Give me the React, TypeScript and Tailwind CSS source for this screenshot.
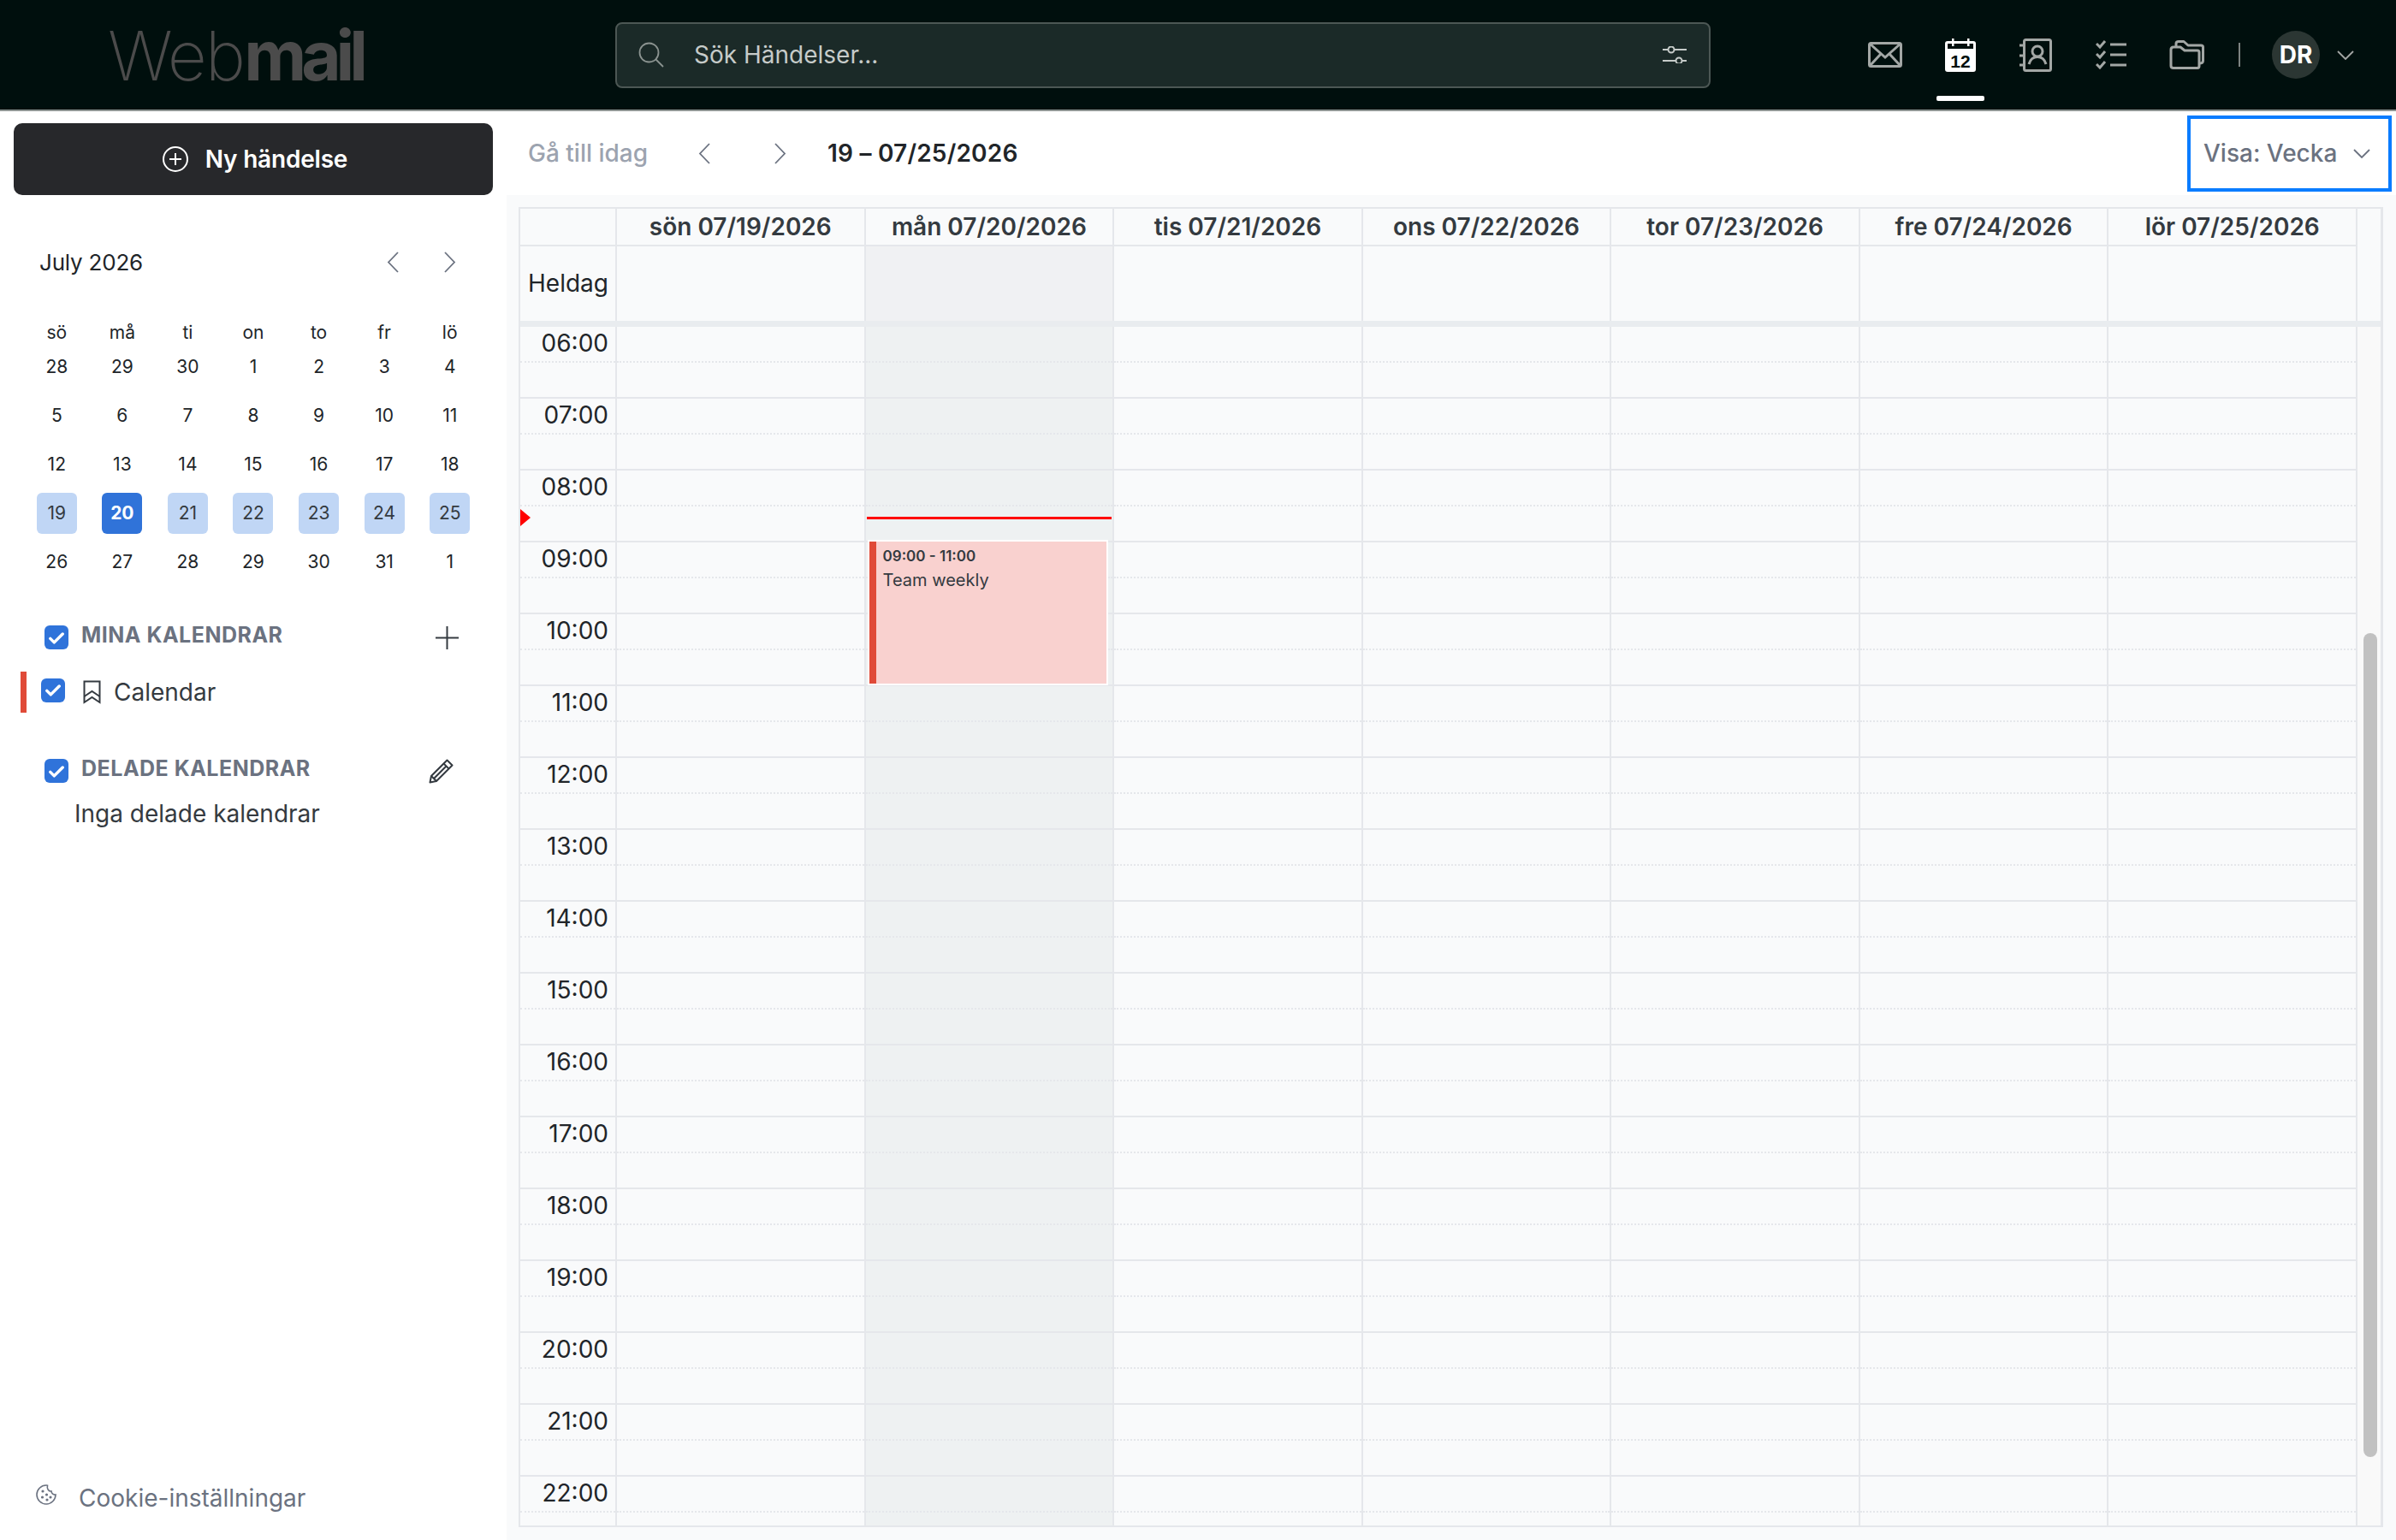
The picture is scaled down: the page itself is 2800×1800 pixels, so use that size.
const weeks = [
  [28, 29, 30, 1, 2, 3, 4],
  [5, 6, 7, 8, 9, 10, 11],
  [12, 13, 14, 15, 16, 17, 18],
  [19, 20, 21, 22, 23, 24, 25],
  [26, 27, 28, 29, 30, 31, 1],
];
const dayNames = ["sö", "må", "ti", "on", "to", "fr", "lö"];
const columns = ["sön 07/19/2026", "mån 07/20/2026", "tis 07/21/2026", "ons 07/22/2026", "tor 07/23/2026", "fre 07/24/2026", "lör 07/25/2026"];
const hours = ["06:00", "07:00", "08:00", "09:00", "10:00", "11:00", "12:00", "13:00", "14:00", "15:00", "16:00", "17:00", "18:00", "19:00", "20:00", "21:00", "22:00"];

function Chevron({ dir, className }: { dir: "left" | "right" | "down"; className: string }) {
  if (dir === "down") {
    return (
      <svg viewBox="0 0 20 11" fill="none" stroke="currentColor" strokeWidth="1.8" className={className}>
        <polyline points="1,1 10,10 19,1" />
      </svg>
    );
  }
  return (
    <svg viewBox="0 0 14 25" fill="none" stroke="currentColor" strokeWidth="1.8" className={className}>
      {dir === "left" ? <polyline points="13,1 2,12.5 13,24" /> : <polyline points="1,1 12,12.5 1,24" />}
    </svg>
  );
}

function Check() {
  return (
    <div className="flex h-[28px] w-[28px] shrink-0 items-center justify-center rounded-[6px] bg-[#2f73da]">
      <svg viewBox="0 0 20 16" fill="none" stroke="white" strokeWidth="3.8" strokeLinecap="round" strokeLinejoin="round" className="h-[15px] w-[18px]">
        <polyline points="2,9 7,14 18,3" />
      </svg>
    </div>
  );
}

function Header() {
  return (
    <header className="flex h-[130px] shrink-0 items-center border-b-2 border-[#8f9593] bg-[#000f0d]">
      <div className="w-[719px] shrink-0 pl-[126px] pt-[2px] text-[80px] leading-none tracking-[-2px] text-[#4b4b4b]">
        <span className="font-extralight">Web</span>
        <span className="tracking-[-6px] font-bold">mail</span>
      </div>
      <div className="flex h-[77px] w-[1280px] shrink-0 items-center rounded-[8px] border-2 border-[#4c5754] bg-[#1b2a28] pl-[25px] pr-[26px]">
        <svg viewBox="0 0 30 30" fill="none" stroke="#8b9390" strokeWidth="1.8" className="h-[30px] w-[30px] shrink-0">
          <circle cx="12.5" cy="12.5" r="11" />
          <line x1="20.5" y1="20.5" x2="29" y2="29" />
        </svg>
        <span className="ml-[35px] flex-1 text-[28px] text-[#c6cbc9]">Sök Händelser...</span>
        <svg viewBox="0 0 28 20" fill="none" stroke="#c6cbc9" strokeWidth="2" className="h-[20px] w-[28px] shrink-0">
          <line x1="0" y1="4" x2="6" y2="4" />
          <circle cx="10" cy="4" r="3.5" />
          <line x1="14" y1="4" x2="28" y2="4" />
          <line x1="0" y1="17" x2="15" y2="17" />
          <circle cx="19" cy="17" r="3.5" />
          <line x1="23" y1="17" x2="28" y2="17" />
        </svg>
      </div>
      <nav className="ml-[160px] flex h-full items-center">
        <div className="flex w-[88px] justify-center">
          <svg viewBox="0 0 40 30" fill="none" stroke="#a3a7a5" strokeWidth="3" className="h-[30px] w-[40px]">
            <rect x="1.5" y="1.5" width="37" height="27" rx="2" />
            <polyline points="2,2 20,18 38,2" />
            <line x1="2" y1="28" x2="15" y2="14" />
            <line x1="38" y1="28" x2="25" y2="14" />
          </svg>
        </div>
        <div className="relative flex h-full w-[88px] items-center justify-center">
          <svg viewBox="0 0 36 39" className="h-[39px] w-[36px]">
            <rect x="0" y="3" width="36" height="36" rx="3" fill="white" />
            <rect x="3" y="6" width="30" height="6" fill="#000f0d" />
            <rect x="8" y="0" width="2.5" height="9" fill="white" />
            <rect x="26" y="0" width="2.5" height="9" fill="white" />
            <text x="18" y="34" textAnchor="middle" fontSize="21" fontWeight="700" fontFamily="Liberation Sans" fill="#000f0d">12</text>
          </svg>
          <div className="absolute bottom-[10px] left-[16px] h-[6px] w-[56px] rounded-[2px] bg-white" />
        </div>
        <div className="flex w-[88px] justify-center">
          <svg viewBox="0 0 38 39" fill="none" stroke="#a3a7a5" strokeWidth="3" className="h-[39px] w-[38px]">
            <rect x="5.5" y="1.5" width="31" height="36" rx="2" />
            <line x1="0" y1="8" x2="5" y2="8" />
            <line x1="0" y1="20" x2="5" y2="20" />
            <line x1="0" y1="31" x2="5" y2="31" />
            <circle cx="21" cy="15" r="6" />
            <path d="M11 30 C13 23 17 21.5 21 21.5 C25 21.5 29 23 31 30" />
          </svg>
        </div>
        <div className="flex w-[88px] justify-center">
          <svg viewBox="0 0 36 34" fill="none" stroke="#a3a7a5" strokeWidth="3" className="h-[34px] w-[36px]">
            <polyline points="1,4 5,8 11,1" />
            <polyline points="1,16 5,20 11,13" />
            <polyline points="1,28 5,32 11,25" />
            <line x1="17" y1="5" x2="36" y2="5" />
            <line x1="17" y1="17" x2="36" y2="17" />
            <line x1="17" y1="29" x2="36" y2="29" />
          </svg>
        </div>
        <div className="flex w-[88px] justify-center">
          <svg viewBox="0 0 41 34" fill="none" stroke="#a3a7a5" strokeWidth="3" strokeLinejoin="round" className="h-[34px] w-[41px]">
            <path d="M2 11 C2 9 3 8 5 8 H13 L18 12 H33 C34.5 12 35 13 35 14 V30 C35 31.5 34 32.5 33 32.5 H5 C3 32.5 2 31.5 2 30 Z" />
            <path d="M8 8 V4 C8 2.5 9 1.5 11 1.5 H17 L22 6 H37 C38.5 6 39.5 7 39.5 8 V24 C39.5 26 38 27 35 27" />
          </svg>
        </div>
        <div className="ml-[17px] h-[28px] w-[2px] bg-[#7d8381]" />
        <div className="ml-[37px] flex h-[56px] w-[56px] items-center justify-center rounded-full bg-[#2b3633] text-[28px] font-bold text-white">DR</div>
        <Chevron dir="down" className="ml-[20px] h-[11px] w-[20px] text-[#a3a7a5]" />
      </nav>
    </header>
  );
}

function Sidebar() {
  return (
    <aside className="flex w-[592px] shrink-0 flex-col bg-white pb-[29px]">
      <button className="mx-[16px] mt-[14px] flex h-[84px] shrink-0 items-center justify-center gap-[20px] rounded-[10px] bg-[#27282b] pl-[4px] text-[28px] font-semibold tracking-[-0.2px] text-white">
        <svg viewBox="0 0 30 30" fill="none" stroke="white" strokeWidth="2" className="h-[30px] w-[30px]">
          <circle cx="15" cy="15" r="14" />
          <line x1="15" y1="8" x2="15" y2="22" />
          <line x1="8" y1="15" x2="22" y2="15" />
        </svg>
        Ny händelse
      </button>
      <div className="mt-[58px] flex h-[40px] items-center pl-[46px] pr-[59px]">
        <span className="flex-1 text-[26px] tracking-[-0.2px] text-[#212529]">July 2026</span>
        <Chevron dir="left" className="h-[25px] w-[14px] text-[#6b7280]" />
        <Chevron dir="right" className="ml-[53px] h-[25px] w-[14px] text-[#6b7280]" />
      </div>
      <div className="ml-[28px] mt-[52px] grid w-[536px] grid-cols-7 self-start text-center text-[21px] leading-[22px] text-[#212529]">
        {dayNames.map((d) => (
          <div key={d}>{d}</div>
        ))}
      </div>
      <div className="ml-[28px] w-[536px]">
        {weeks.map((w, i) => (
          <div key={i} className="grid h-[57px] grid-cols-7">
            {w.map((d, j) => (
              <div key={j} className="flex items-center justify-center">
                {i === 3 ? (
                  <span className={"flex h-[48px] w-[47px] items-center justify-center rounded-[6px] text-[21px] " + (j === 1 ? "bg-[#3073d9] font-bold text-white" : "bg-[#c0d6f5] text-[#343a40]")}>{d}</span>
                ) : (
                  <span className="text-[21px] text-[#212529]">{d}</span>
                )}
              </div>
            ))}
          </div>
        ))}
      </div>
      <div className="mt-[46px] flex h-[28px] items-center pl-[52px] pr-[56px]">
        <Check />
        <span className="mb-[4px] ml-[15px] flex-1 text-[25px] font-bold tracking-[0.5px] text-[#6b7280]">MINA KALENDRAR</span>
        <svg viewBox="0 0 27 27" fill="none" stroke="#343a40" strokeWidth="2" className="h-[27px] w-[27px]">
          <line x1="13.5" y1="0" x2="13.5" y2="27" />
          <line x1="0" y1="13.5" x2="27" y2="13.5" />
        </svg>
      </div>
      <div className="mt-[26px] flex h-[48px] items-center pl-[24px]">
        <div className="h-full w-[7px] bg-[#e04a38]" />
        <div className="mb-[5px] ml-[17px]">
          <Check />
        </div>
        <svg viewBox="0 0 21 28" fill="none" stroke="#343a40" strokeWidth="2" className="ml-[21px] h-[28px] w-[21px]">
          <path d="M1.5 1.5 H19.5 V26 L10.5 20 L1.5 26 Z" />
          <polyline points="1.5,19 10.5,13 19.5,19" />
        </svg>
        <span className="ml-[15px] text-[28px] text-[#343a40]">Calendar</span>
      </div>
      <div className="mt-[54px] flex h-[28px] items-center pl-[52px] pr-[62px]">
        <Check />
        <span className="mb-[4px] ml-[15px] flex-1 text-[25px] font-bold tracking-[0.5px] text-[#6b7280]">DELADE KALENDRAR</span>
        <svg viewBox="0 0 29 29" fill="none" stroke="#343a40" strokeWidth="2" strokeLinejoin="round" className="h-[29px] w-[29px]">
          <path d="M21.5 1.5 L27.5 7.5 L9 26 L1.5 27.5 L3 20 Z" />
          <line x1="17.5" y1="5.5" x2="23.5" y2="11.5" />
          <line x1="6" y1="23" x2="20.5" y2="8.5" />
          <line x1="3" y1="20" x2="9" y2="26" />
        </svg>
      </div>
      <div className="mt-[16px] pl-[87px] text-[28px] leading-[40px] text-[#343a40]">Inga delade kalendrar</div>
      <div className="mt-auto flex h-[40px] items-center pl-[42px]">
        <svg viewBox="0 0 24 24" fill="none" stroke="#6b7280" strokeWidth="1.6" className="mb-[8px] h-[24px] w-[24px]">
          <path d="M12 1 C6 1 1 6 1 12 C1 18 6 23 12 23 C18 23 23 18 23 12 C20.5 12.5 18 10.5 18 8 C15 8.5 12.5 5 13.5 1.2 C13 1 12.5 1 12 1 Z" />
          <circle cx="8" cy="8" r="0.8" fill="#6b7280" />
          <circle cx="7.5" cy="15" r="0.8" fill="#6b7280" />
          <circle cx="13" cy="18" r="0.8" fill="#6b7280" />
          <circle cx="17" cy="15" r="0.8" fill="#6b7280" />
          <circle cx="12.5" cy="12" r="0.8" fill="#6b7280" />
        </svg>
        <span className="ml-[26px] text-[28px] text-[#6b7280]">Cookie-inställningar</span>
      </div>
    </aside>
  );
}

function Toolbar() {
  return (
    <div className="flex h-[98px] shrink-0 items-center bg-white pl-[25px] pr-[5px]">
      <span className="text-[28px] font-medium text-[#9ca3af]">Gå till idag</span>
      <Chevron dir="left" className="ml-[59px] h-[25px] w-[14px] text-[#6b7280]" />
      <Chevron dir="right" className="ml-[75px] h-[25px] w-[14px] text-[#6b7280]" />
      <span className="ml-[48px] text-[28px] font-semibold tracking-[0.2px] text-[#212529]">19 – 07/25/2026</span>
      <div className="ml-auto flex h-[89px] w-[239px] items-center border-4 border-[#0a7cff] pl-[15px] text-[28px] font-medium text-[#6b7280]">
        Visa: Vecka
        <Chevron dir="down" className="ml-[19px] h-[11px] w-[20px] text-[#6b7280]" />
      </div>
    </div>
  );
}

function HourRow({ hour, index }: { hour: string; index: number }) {
  return (
    <div className="grid h-[84px] shrink-0 grid-cols-[113px_repeat(7,1fr)]">
      <div className="relative flex h-full flex-col border-r-2 border-[#e5e7eb]">
        <div className="h-[42px] border-b-2 border-dotted border-[#e5e7eb] pr-[8px] text-right text-[28px] leading-[38px] text-[#212529]">{hour}</div>
        <div className="flex-1 border-b-2 border-[#e5e7eb]" />
        {index === 2 && (
          <svg viewBox="0 0 12 20" className="absolute left-0 top-[45px] h-[20px] w-[12px]">
            <polygon points="0,0 12,10 0,20" fill="#ff0000" />
          </svg>
        )}
      </div>
      {columns.map((c, i) => (
        <div key={c} className={"relative flex flex-col border-r-2 border-[#e5e7eb] " + (i === 1 ? "bg-[#eef1f2]" : "")}>
          <div className="h-[42px] border-b-2 border-dotted border-[#e5e7eb]" />
          <div className="flex-1 border-b-2 border-[#e5e7eb]" />
          {i === 1 && index === 2 && <div className="absolute left-[1px] right-[1px] top-[54px] z-10 h-[3px] bg-[#ff0000]" />}
          {i === 1 && index === 3 && (
            <div className="absolute left-[2px] top-[-3px] z-10 flex h-[170px] w-[281px] border-2 border-white bg-[#f9d1cf]">
              <div className="w-[8px] shrink-0 bg-[#e04a38]" />
              <div className="pl-[8px] pt-[4px] text-[#343a40]">
                <div className="text-[17px] font-semibold leading-[26px]">09:00 - 11:00</div>
                <div className="mt-[1px] text-[20px] leading-[28px]">Team weekly</div>
              </div>
            </div>
          )}
        </div>
      ))}
    </div>
  );
}

function WeekGrid() {
  return (
    <div className="flex flex-1 flex-col overflow-hidden bg-[#f9fafb] pb-[15px] pl-[14px] pr-[15px] pt-[14px]">
      <div className="flex flex-1 flex-col overflow-hidden border-2 border-r-[3px] border-[#e5e7eb]">
        <div className="w-[2147px] shrink-0">
          <div className="grid h-[44px] grid-cols-[113px_repeat(7,1fr)] border-b-2 border-[#e5e7eb]">
            <div className="border-r-2 border-[#e5e7eb]" />
            {columns.map((c) => (
              <div key={c} className="flex items-center justify-center border-r-2 border-[#e5e7eb] text-[28px] font-semibold text-[#343a40]">
                {c}
              </div>
            ))}
          </div>
          <div className="grid h-[87px] grid-cols-[113px_repeat(7,1fr)]">
            <div className="flex items-center justify-end border-r-2 border-[#e5e7eb] pb-[2px] pr-[8px] text-[28px] text-[#212529]">Heldag</div>
            {columns.map((c, i) => (
              <div key={c} className={"border-r-2 border-[#e5e7eb] " + (i === 1 ? "bg-[#f0f1f3]" : "")} />
            ))}
          </div>
        </div>
        <div className="h-[7px] shrink-0 bg-[#e9ecef]" />
        <div className="flex min-h-0 flex-1">
          <div className="flex w-[2147px] shrink-0 flex-col overflow-hidden">
            {hours.map((h, i) => (
              <HourRow key={h} hour={h} index={i} />
            ))}
          </div>
          <div className="flex-1 bg-[#f9f9f9] pl-[7px] pr-[4px] pt-[358px]">
            <div className="h-[963px] rounded-full bg-[#c1c1c1]" />
          </div>
        </div>
      </div>
    </div>
  );
}

export default function App() {
  return (
    <div className="flex h-screen w-full flex-col overflow-hidden bg-white font-['Inter',sans-serif]">
      <Header />
      <div className="flex min-h-0 flex-1">
        <Sidebar />
        <main className="flex min-w-0 flex-1 flex-col">
          <Toolbar />
          <WeekGrid />
        </main>
      </div>
    </div>
  );
}
